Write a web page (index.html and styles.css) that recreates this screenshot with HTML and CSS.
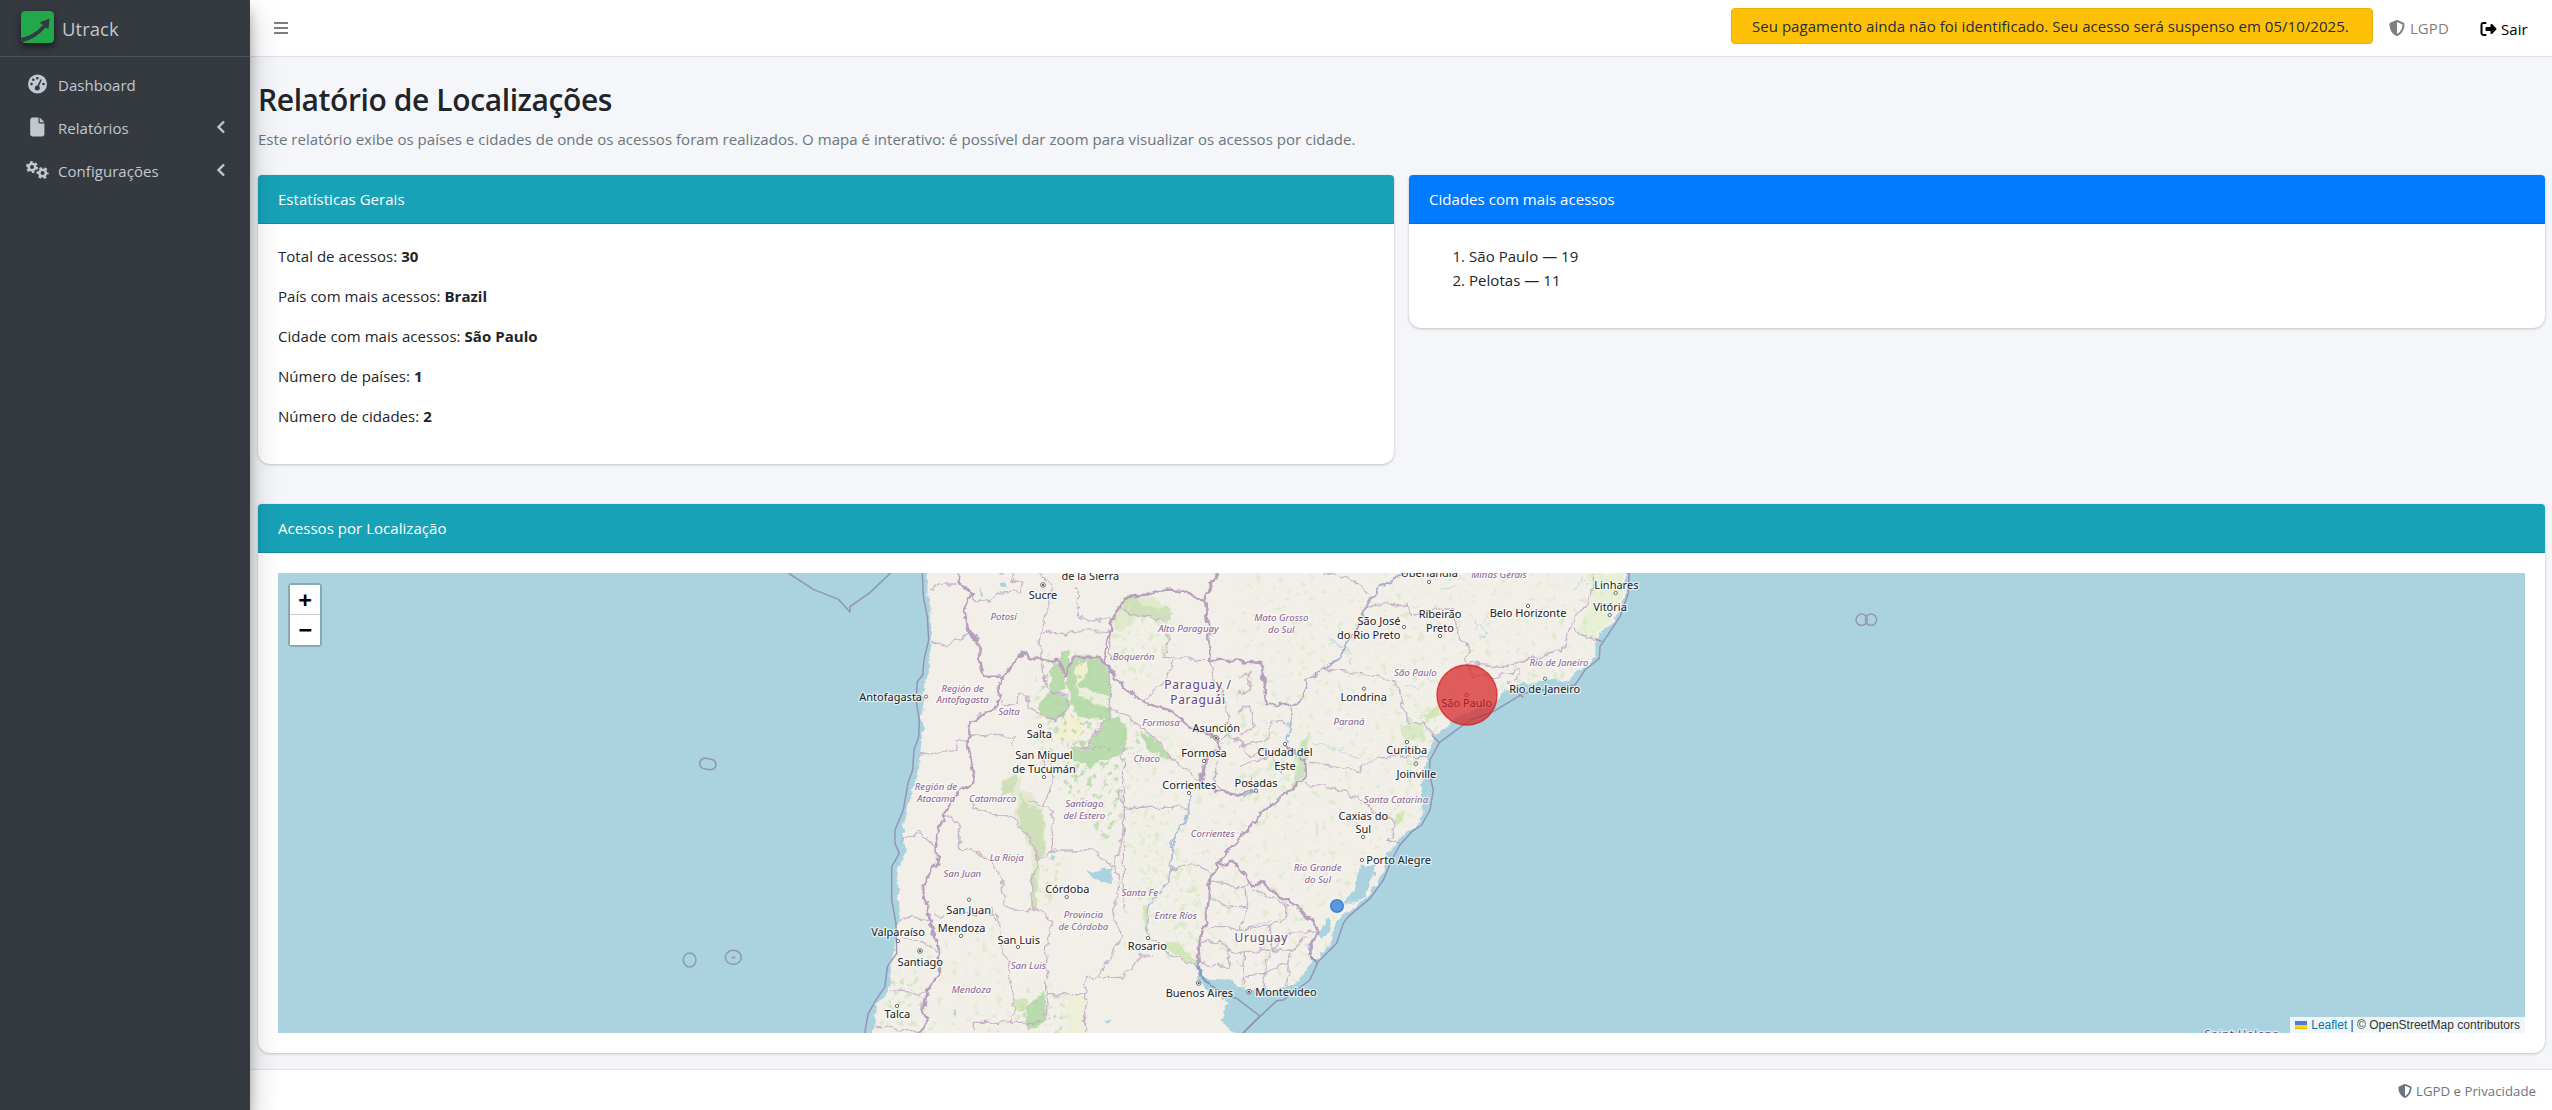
FILE: index.html
```html
<!DOCTYPE html>
<html lang="pt-BR">
<head>
<meta charset="utf-8">
<title>Utrack</title>
<link rel="stylesheet" href="styles.css">
</head>
<body>
<div class="app">
  <aside class="sidebar">
    <div class="brand">
      <svg class="brand-logo" viewBox="0 0 33 32"><rect width="33" height="32" rx="4" fill="#21a84a"/><path d="M0 27Q12 25 22 14L18.500 11.500 28.500 7.500 27.500 18 24.500 16.500Q14 28.500 2 31Q.5 30.500 0 29.500Z" fill="#343a40"/></svg>
      <span class="brand-text">Utrack</span>
    </div>
    <nav class="nav">
      <a class="nav-item">
        <svg class="nav-icon" viewBox="0 0 24 20"><circle cx="12.500" cy="10" r="9.500" fill="#c2c7d0"/><g fill="#343a40"><circle cx="6.500" cy="10" r="1.300"/><circle cx="8.300" cy="5.800" r="1.300"/><circle cx="12.300" cy="4.200" r="1.300"/><circle cx="18.500" cy="10" r="1.300"/><circle cx="12.300" cy="14" r="2.500"/><path d="M15.600 5.200l1.300.6-3.600 8-1.600-.7z"/></g></svg>
        <span>Dashboard</span>
      </a>
      <a class="nav-item">
        <svg class="nav-icon" viewBox="0 0 24 20"><path transform="translate(5.200 .500) scale(.037)" fill="#c2c7d0" d="M0 64C0 28.700 28.700 0 64 0L224 0l0 128c0 17.700 14.300 32 32 32l128 0 0 288c0 35.300-28.700 64-64 64L64 512c-35.300 0-64-28.700-64-64L0 64zm384 64l-128 0L256 0 384 128z"/></svg>
        <span>Relatórios</span>
        <svg class="chevron" viewBox="0 0 10 14"><path d="M8 1.500L2.500 7 8 12.500"/></svg>
      </a>
      <a class="nav-item">
        <svg class="nav-icon" viewBox="0 0 24 20"><g fill="none" stroke="#c2c7d0"><circle cx="7" cy="7" r="3.300" stroke-width="2.600"/><circle cx="7" cy="7" r="5" stroke-width="2.200" stroke-dasharray="2.600 2.636"/><circle cx="17.600" cy="13" r="3.300" stroke-width="2.600"/><circle cx="17.600" cy="13" r="5" stroke-width="2.200" stroke-dasharray="2.600 2.636" stroke-dashoffset="1.300"/></g></svg>
        <span>Configurações</span>
        <svg class="chevron" viewBox="0 0 10 14"><path d="M8 1.500L2.500 7 8 12.500"/></svg>
      </a>
    </nav>
  </aside>

  <div class="page">
    <header class="topbar">
      <svg class="menu-icon" viewBox="0 0 14 12"><path d="M0 1h14M0 6h14M0 11h14" stroke="#7f7f7f" stroke-width="1.800"/></svg>
      <div class="topbar-right">
        <div class="alert">Seu pagamento ainda não foi identificado. Seu acesso será suspenso em 05/10/2025.</div>
        <a class="top-link lgpd"><svg class="icon-shield" viewBox="0 0 512 512"><path d="M256 0c4.600 0 9.200 1 13.400 2.900L457.700 82.800c22 9.300 38.400 31 38.300 57.200c-.5 99.200-41.300 280.700-213.600 363.200c-16.700 8-36.100 8-52.800 0C57.300 420.700 16.500 239.200 16 140c-.1-26.200 16.300-47.900 38.300-57.200L242.700 2.900C246.800 1 251.400 0 256 0zm0 66.800V444.800C394 378 431.100 230.100 432 141.400L256 66.800z"/></svg>LGPD</a>
        <a class="top-link sair"><svg class="icon-exit" viewBox="0 0 512 512"><path d="M377.900 105.900L500.700 228.700c7.200 7.200 11.300 17.100 11.300 27.300s-4.100 20.100-11.300 27.300L377.900 406.100c-6.400 6.400-15 9.900-24 9.900c-18.700 0-33.900-15.200-33.900-33.900l0-62.100-128 0c-17.700 0-32-14.300-32-32l0-64c0-17.700 14.300-32 32-32l128 0 0-62.100c0-18.700 15.200-33.900 33.900-33.900c9 0 17.600 3.600 24 9.900zM160 96L96 96c-17.700 0-32 14.300-32 32l0 256c0 17.700 14.300 32 32 32l64 0c17.700 0 32 14.300 32 32s-14.300 32-32 32l-64 0c-53 0-96-43-96-96L0 128C0 75 43 32 96 32l64 0c17.700 0 32 14.300 32 32s-14.300 32-32 32z"/></svg>Sair</a>
      </div>
    </header>

    <main class="content">
      <h1 class="title">Relatório de Localizações</h1>
      <p class="subtitle">Este relatório exibe os países e cidades de onde os acessos foram realizados. O mapa é interativo: é possível dar zoom para visualizar os acessos por cidade.</p>

      <div class="row">
        <section class="card">
          <div class="card-header info">Estatísticas Gerais</div>
          <div class="card-body">
            <p>Total de acessos: <strong>30</strong></p>
            <p>País com mais acessos: <strong>Brazil</strong></p>
            <p>Cidade com mais acessos: <strong>São Paulo</strong></p>
            <p>Número de países: <strong>1</strong></p>
            <p>Número de cidades: <strong>2</strong></p>
          </div>
        </section>
        <section class="card">
          <div class="card-header primary">Cidades com mais acessos</div>
          <div class="card-body">
            <ol>
              <li>São Paulo — 19</li>
              <li>Pelotas — 11</li>
            </ol>
          </div>
        </section>
      </div>

      <section class="card">
        <div class="card-header info">Acessos por Localização</div>
        <div class="card-body">
          <div class="map">
            <svg class="map-canvas" viewBox="-1686 39 6741 1380">
              <defs>
                <filter id="rough" filterUnits="userSpaceOnUse" x="-1686" y="-60" width="4500" height="1600">
                  <feTurbulence type="fractalNoise" baseFrequency=".035" numOctaves="3" seed="4"/>
                  <feDisplacementMap in="SourceGraphic" scale="26" xChannelSelector="R" yChannelSelector="G"/>
                </filter>
                <filter id="speckle" filterUnits="userSpaceOnUse" x="0" y="0" width="2500" height="1440">
                  <feTurbulence type="fractalNoise" baseFrequency=".05" numOctaves="4" seed="9"/>
                  <feColorMatrix values="0 0 0 0 1  0 0 0 0 1  0 0 0 0 1  7 0 0 0 -3.900" result="n"/>
                  <feGaussianBlur in="SourceGraphic" stdDeviation="12" result="b"/>
                  <feComposite in="b" in2="n" operator="in"/>
                </filter>
                <filter id="speckle-sparse" filterUnits="userSpaceOnUse" x="0" y="0" width="2500" height="1440">
                  <feTurbulence type="fractalNoise" baseFrequency=".045" numOctaves="4" seed="21"/>
                  <feColorMatrix values="0 0 0 0 1  0 0 0 0 1  0 0 0 0 1  8 0 0 0 -5" result="n"/>
                  <feComposite in="SourceGraphic" in2="n" operator="in"/>
                </filter>
                <clipPath id="land-clip"><use href="#land"/></clipPath>
              </defs>
              <rect x="-1686" y="39" width="6741" height="1380" fill="#aad3df"/>

              <g filter="url(#rough)">
                <path id="land" fill="#f2efe9" d="M263 0L263 39 262 130 275 200 275 250 268 290 270 330 263 355 250 370 248 400 252 440 245 480 252 530 243 560 238 620 232 650 222 665 215 700 205 730 195 790 183 820 195 850 192 895 175 920 170 970 178 1030 180 1080 168 1130 165 1180 150 1210 148 1280 125 1320 110 1340 100 1390 85 1480H1240L1195 1419 1175 1412 1150 1390 1147 1360 1163 1330 1140 1310 1110 1290 1085 1270 1072 1245 1095 1250 1110 1262 1165 1255 1185 1270 1230 1293 1280 1290 1330 1285 1360 1275 1390 1250 1400 1230 1415 1205 1435 1190 1465 1160 1480 1120 1490 1085 1505 1065 1540 1040 1580 1005 1610 970 1630 930 1640 900 1645 875 1670 850 1700 815 1740 785 1745 750 1745 700 1748 640 1760 590 1775 560 1790 525 1810 505 1850 475 1890 455 1930 440 1970 425 1990 400 2010 385 2050 370 2120 362 2190 360 2205 340 2250 310 2265 290 2268 250 2290 215 2325 180 2340 150 2355 110 2362 39V0Z"/>
                <g fill="#dfe8c8" opacity=".8">
                  <path d="M530 690L575 700 610 760 615 860 600 905 580 1050 577 900 560 830 530 800Z"/>
                  <path d="M815 190L860 110 940 110 990 140 995 185 900 170 840 220Z"/>
                  <path d="M480 700L495 650 545 655 530 705Z"/>
                  <path d="M680 1305H735V1430H680Z" fill="#eef0d5"/>
                </g>
                <g fill="#cfdfb9">
                  <path d="M850 118L890 110 910 140 995 142V185L950 178 845 150Z"/>
                  <path d="M480 705L490 660 530 645 520 700Z"/>
                  <path d="M535 800L540 700 565 740 605 750 612 880 595 905 580 850Z"/>
                  <path d="M576 930L590 960 592 1048 576 1048Z"/>
                </g>
                <g fill="#badbae">
                  <path d="M660 270L688 270 686 310 675 350 660 310Z"/>
                  <path d="M630 330L655 305 672 350 680 380 655 400 630 395Z"/>
                  <path d="M698 290H775L808 340V465L790 480 740 470 700 460 690 400 680 360Z"/>
                  <path d="M600 425L640 395 685 410 680 470 640 480 600 465Z"/>
                  <path d="M808 468L860 490 865 540 850 560 738 562Z"/>
                  <path d="M900 515L930 525 1000 600 930 575Z"/>
                  <path d="M700 565H850V585L800 600 740 625 700 600Z"/>
                  <path d="M555 1350L610 1300 620 1385 560 1419Z"/>
                  <path d="M1380 555L1405 515 1405 550 1398 640 1360 675 1370 600Z" opacity=".7"/>
                </g>
                <g fill="#f4f1d2" opacity=".95">
                  <path d="M715 310L745 295 735 350 700 385Z"/>
                  <path d="M705 375L808 410V445L770 432 720 405Z" fill="#eef0df"/>
                  <path d="M660 480L710 460 735 520 700 545 650 540Z"/>
                </g>
                <g fill="#c9e3a8" opacity=".75">
                  <path d="M1745 465L1790 445 1800 460 1760 490Z"/>
                  <path d="M525 1320L570 1315 565 1345 525 1350Z"/>
                  <path d="M960 1150L1010 1150 1070 1200 1080 1220 1020 1190Z"/>
                  <path d="M908 1040L925 1035 925 1110 935 1140 915 1100Z"/>
                  <path d="M1670 760L1695 750 1690 780 1665 800Z"/>
                </g>
                <path fill="#d5e6c0" opacity=".8" d="M1680 500L1720 485 1755 490 1750 530 1700 540 1685 520Z"/>
                <path fill="#e4efcf" opacity=".8" d="M2240 39H2350L2345 120 2290 200 2265 235 2210 220 2220 190 2260 120Z"/>
              </g>

              <g clip-path="url(#land-clip)">
                <g filter="url(#speckle)" opacity=".8">
                  <path fill="#b4d8a6" d="M590 290L690 280 800 300 815 460 990 590 860 600 850 780 800 860 680 720 640 640 590 520ZM530 1370L560 1280 660 1290 680 1430H540Z"/>
                  <path fill="#d6eabf" d="M800 220L850 130 990 140 1000 260 960 330 900 390 820 320ZM1000 920L1080 920 1100 1060 1070 1210 980 1170ZM900 740L980 760 960 980 930 1120 900 1050ZM940 510L1060 560 1080 640 1010 620ZM1200 640L1390 560 1390 660 1260 750 1170 720Z"/>
                  <path fill="#cbe3b8" d="M590 430L650 460 650 600 590 680ZM170 1190L270 1170 250 1400 110 1400ZM1690 460L1790 440 1760 560 1740 700 1680 640ZM1930 420L2060 360 2200 330 2200 360 2000 400ZM600 900L670 890 650 1020 590 1040ZM540 780L600 790 600 880Z"/>
                </g>
                <g filter="url(#speckle-sparse)" opacity=".5">
                  <path fill="#cbe5b8" d="M1200 40H2350L2200 360 1800 480 1730 790 1640 870 1450 1280 1180 1280 1080 1200 850 1200 850 600 1100 600ZM300 1100L470 1080 520 1419 240 1419Z"/>
                </g>
              </g>

              <g filter="url(#rough)">
                <g fill="#aad3df">
                  <path d="M1565 915L1605 915 1600 955 1570 1010 1530 1035 1512 1030 1515 1010 1545 990 1555 950Z"/>
                  <path d="M1465 1070L1475 1080 1470 1120 1450 1130 1440 1115 1455 1090Z"/>
                  <path d="M738 925L760 935 790 925 818 925V965L785 970 765 955Z"/>
                  <path d="M635 880L648 882 645 905 634 900Z"/>
                  <path d="M472 40L490 40 488 48 474 46ZM478 62L498 60 498 76 484 76ZM410 85L432 104 424 108ZM340 1345L350 1350 345 1375ZM790 1380L808 1380 804 1392 792 1390Z"/>
                </g>
                <g fill="none" stroke="#b5d6e2" stroke-width="3" stroke-linejoin="round">
                  <path d="M1460 240L1520 265 1535 310M1900 210L1935 175 1960 150M1900 180L1940 225 1920 240M1420 550L1490 570 1560 600M1700 380L1740 385M1800 90L1850 80M2200 90L2230 60 2245 80M1210 1110L1260 1095 1300 1080M1400 1150L1410 1180M1430 790L1437 830"/>
                </g>
                <path fill="none" stroke="#a9c6dc" stroke-width="7" d="M1700 39L1620 80 1585 130 1570 175 1530 230 1500 290 1445 330"/>
                <path fill="none" stroke="#b3a3c4" stroke-width="4" d="M1700 39L1620 80 1585 130 1570 175 1530 230 1500 290 1445 330 1405 360 1375 430 1358 440"/>
                <path fill="none" stroke="#a9bdd6" stroke-width="5" d="M1355 440L1350 510 1335 560M1047 700L1045 760 1000 840 990 960 925 1040 920 1120"/>
                <path fill="none" stroke="#c3b4cf" stroke-width="4" d="M920 1120L990 1180 1078 1220"/>
                <path fill="none" stroke="#9fbfd8" stroke-width="6" d="M1120 690L1180 700 1215 710 1250 690"/>
                <path fill="none" stroke="#7c9fc6" stroke-width="8" d="M1075 1200L1085 1250 1110 1275M1440 1115L1410 1150 1410 1190"/>
                <g fill="none" stroke="#bfa6c2" stroke-width="4" opacity=".8" stroke-linejoin="round">
                  <path d="M270 85L310 72 350 72M278 247L305 247 318 260 345 242 388 218M240 585L300 578 350 572 352 545 383 540M388 525L520 532 520 565M600 40L640 85 610 180 600 250 605 290 615 370 630 395 683 402 683 450 650 480 610 470 570 440 560 405 535 400 530 430 500 440 480 420M392 100L400 120 450 130 470 100 540 95 548 70 515 60 525 40M610 220L640 212 680 225 690 212 812 214M700 80L715 85V177H815M845 150L980 188 985 240 970 292 1108 300M1000 300L970 370 910 420M812 214V300M808 330V466L735 562M690 562H850V742H1047M808 445L860 470 940 530 1000 600 1080 660M1108 300L1120 350 1160 430 1165 520 1135 540M1130 600L1120 650 1150 700M1160 530L1200 540 1230 590 1280 560M1195 350L1230 340 1225 390 1195 400M1190 460L1230 440 1240 500 1200 530"/>
                  <path d="M315 765L360 790 355 865 400 870 460 910 485 960 490 1030 520 1050 600 1048 635 1085 620 1160 620 1385M390 720L400 745 470 765 525 770 530 800 570 830 597 905 575 960 576 1050M597 905L635 870 760 870 790 900 820 920 840 960 818 1070 848 1125 775 1250M560 720L600 735 635 750 638 870M600 590L640 660 610 740M838 690L850 740 845 830 820 920M185 840L240 820 285 860M182 1080L210 1070 270 1080M180 1130L260 1150 300 1180M150 1290L250 1300M100 1400L150 1400 240 1420M285 1060L310 1070 340 1060 470 1060 480 1150 510 1210 505 1250 525 1320 515 1385M400 1430V1387H620M620 1304H737V1252H850L900 1190 940 1180M737 1252V1430M850 742V1040M990 925L1060 910 1110 940M455 1045L465 1080"/>
                  <path d="M1445 330L1560 340 1600 350 1660 360 1680 400 1700 490 1750 490 1790 530M1580 140L1640 130 1700 140 1720 165 1800 145 1840 150 1850 190 1860 240 1885 250 1880 310 1900 350 1960 350 2040 330 2045 345 2000 370M1880 310L1990 320 2060 300 2170 270 2190 210 2210 160 2240 140 2260 80 2260 39M2205 200L2225 225 2285 240M1450 39L1520 50 1585 100M1405 610L1480 615 1560 635 1570 610 1640 590 1760 590M1395 670L1460 680 1510 690 1560 720 1620 770 1665 780 1660 830 1640 840 1680 850M1200 560L1280 540 1300 480 1350 490M1200 620L1290 590 1330 640M1250 700L1230 640"/>
                  <path d="M1115 960L1180 980 1220 980M1110 1015L1170 1040 1220 1040M1100 1100L1160 1100 1200 1110 1220 1050 1215 980 1240 960M1240 990L1340 1030 1340 1070 1290 1100 1200 1110M1340 1120L1300 1170 1360 1170 1400 1130M1080 1150L1140 1140 1160 1170 1200 1180 1290 1170 1270 1240 1340 1210 1360 1170M1300 1170L1290 1100M1075 1200L1100 1215 1170 1220 1160 1170M1210 1180V1270M1270 1240L1280 1290M1210 1250L1270 1240M1345 1210L1340 1280M1340 1120L1440 1115"/>
                </g>
                <g fill="none" stroke="#b79fbd" stroke-width="7.500" stroke-linejoin="round">
                  <path d="M352 39L362 75 392 100 372 150 388 218 410 240 430 350 485 350 470 435 390 490 385 560 403 660 350 700 310 770 288 840 292 910 270 940 248 990 265 1060 285 1130 297 1170 297 1240 262 1290 250 1350 262 1380 240 1420"/>
                  <path d="M485 350L540 295 545 275 570 295 655 300 674 350 698 290H775L790 305 820 340 850 380 920 430 990 450 1050 500 1130 530 1135 570 1095 600 1085 660 1070 690"/>
                  <path d="M790 305L815 185 850 117 970 92H1035L1095 128 1130 39M1095 128L1108 200 1108 300 1180 300 1265 310 1275 400 1280 435 1355 435"/>
                  <path d="M1335 555L1395 600 1398 650 1350 690 1265 760 1200 830 1130 915 1110 960 1100 1080 1075 1150 1080 1220M1130 915L1180 905 1240 980 1265 965 1310 1005 1345 1020 1400 1070 1440 1115 1410 1150 1412 1190 1430 1207M1120 690L1200 705 1240 690"/>
                </g>
              </g>

              <g fill="none" stroke="#8e8aae" stroke-width="4.500" opacity=".85" stroke-linejoin="round">
                <path d="M247 39L250 110 262 170 266 240 252 300 248 345 232 365 228 420 238 480 236 530 222 570 218 630 205 665 190 750 165 810 165 850 178 880 155 920 155 1020 168 1090 170 1180 142 1220 135 1280 105 1325 85 1360 72 1430"/>
                <path d="M2367 39L2365 100 2340 170 2280 260 2278 295 2235 330 2205 375 2050 400 1960 455 1890 480 1798 548 1770 600 1768 640 1780 690 1770 750 1745 795 1715 815 1680 855 1655 900 1630 960 1590 1015 1525 1070 1510 1090 1490 1150 1433 1207 1410 1260 1330 1320 1310 1322 1208 1420"/>
                <path d="M1110 1275L1170 1310 1190 1315 1260 1368 1208 1420M2020 390L2050 412M2265 235L2285 245M1775 525L1798 548M1430 1207L1412 1190"/>
                <path d="M-155 39L-80 88 -5 118 30 156 30 140 90 98 152 39"/>
                <path d="M-405 594Q-422 597 -421 613 -418 626 -402 627 -386 633 -374 623 -369 605 -381 599 -393 597 -405 594Z"/>
                <ellipse cx="-451" cy="1200" rx="19" ry="21"/><ellipse cx="-320" cy="1192" rx="24" ry="21"/>
                <path d="M-326 1195l6-4 6 3"/>
                <circle cx="3065" cy="179" r="17"/><circle cx="3093" cy="179" r="17"/>
              </g>

              <g class="dots">
                <circle cx="258" cy="410" r="5"/><circle cx="600" cy="498" r="5"/><circle cx="612" cy="651" r="5"/><circle cx="1092" cy="603" r="5"/><circle cx="1047" cy="699" r="5"/><circle cx="1248" cy="692" r="5"/>
                <circle cx="1767" cy="66" r="5"/><circle cx="2327" cy="99" r="5"/><circle cx="2309" cy="165" r="5"/><circle cx="2064" cy="138" r="5"/><circle cx="1692" cy="201" r="5"/><circle cx="1800" cy="228" r="5"/><circle cx="1572" cy="386" r="5"/><circle cx="2115" cy="356" r="5"/><circle cx="1880" cy="405" r="5"/><circle cx="1335" cy="552" r="5"/><circle cx="1701" cy="546" r="5"/><circle cx="1728" cy="611" r="5"/>
                <circle cx="387" cy="1019" r="5"/><circle cx="363" cy="1128" r="5"/><circle cx="174" cy="1143" r="5"/><circle cx="534" cy="1161" r="5"/><circle cx="680" cy="1011" r="5"/><circle cx="924" cy="1134" r="5"/><circle cx="171" cy="1338" r="5"/><circle cx="1569" cy="831" r="5"/><circle cx="1566" cy="900" r="5"/>
              </g>
              <g class="capitals">
                <circle cx="609" cy="75" r="7"/><circle cx="1128" cy="534" r="7"/><circle cx="240" cy="1173" r="7"/><circle cx="1076" cy="1269" r="7"/><circle cx="1227" cy="1295" r="7"/>
              </g>
              <g class="capital-core">
                <circle cx="609" cy="75" r="3"/><circle cx="1128" cy="534" r="3"/><circle cx="240" cy="1173" r="3"/><circle cx="1076" cy="1269" r="3"/><circle cx="1227" cy="1295" r="3"/>
              </g>

              <g class="state">
                <text x="491" y="180">Potosí</text><text x="1045" y="216">Alto Paraguay</text><text x="881" y="300">Boquerón</text>
                <text x="368" y="395">Región de</text><text x="368" y="430">Antofagasta</text><text x="507" y="465">Salta</text>
                <text x="963" y="499">Formosa</text><text x="920" y="606">Chaco</text>
                <text x="288" y="691">Región de</text><text x="288" y="727">Atacama</text><text x="458" y="727">Catamarca</text>
                <text x="733" y="741">Santiago</text><text x="733" y="777">del Estero</text><text x="1118" y="831">Corrientes</text>
                <text x="500" y="902">La Rioja</text><text x="367" y="952">San Juan</text><text x="899" y="1007">Santa Fe</text>
                <text x="1007" y="1077">Entre Ríos</text><text x="730" y="1073">Provincia</text><text x="730" y="1109">de Córdoba</text>
                <text x="565" y="1226">San Luis</text><text x="394" y="1299">Mendoza</text>
                <text x="1324" y="184">Mato Grosso</text><text x="1324" y="219">do Sul</text><text x="1977" y="55">Minas Gerais</text>
                <text x="2157" y="319">Rio de Janeiro</text><text x="1726" y="349">São Paulo</text><text x="1527" y="496">Paraná</text>
                <text x="1668" y="730">Santa Catarina</text><text x="1433" y="933">Rio Grande</text><text x="1433" y="969">do Sul</text>
              </g>
              <g class="country">
                <text x="1074" y="388">Paraguay /</text><text x="1074" y="433">Paraguái</text><text x="1264" y="1146">Uruguay</text>
                <text x="4206" y="1435" font-size="34">Saint Helena</text>
              </g>
              <g class="city">
                <text x="751" y="61">de la Sierra</text><text x="609" y="117">Sucre</text><text x="152" y="423">Antofagasta</text>
                <text x="598" y="533">Salta</text><text x="612" y="598">San Miguel</text><text x="612" y="639">de Tucumán</text>
                <text x="1129" y="516">Asunción</text><text x="1092" y="590">Formosa</text><text x="1048" y="688">Corrientes</text><text x="1248" y="681">Posadas</text>
                <text x="1768" y="52">Uberlândia</text><text x="2329" y="86">Linhares</text><text x="2310" y="154">Vitória</text>
                <text x="1617" y="196">São José</text><text x="1586" y="237">do Rio Preto</text><text x="1800" y="175">Ribeirão</text><text x="1800" y="216">Preto</text>
                <text x="2064" y="172">Belo Horizonte</text><text x="1571" y="423">Londrina</text><text x="2114" y="398">Rio de Janeiro</text><text x="1880" y="441">São Paulo</text>
                <text x="1335" y="588">Ciudad del</text><text x="1335" y="629">Este</text><text x="1700" y="582">Curitiba</text><text x="1729" y="653">Joinville</text>
                <text x="1570" y="779">Caxias do</text><text x="1570" y="820">Sul</text><text x="1676" y="913">Porto Alegre</text>
                <text x="682" y="998">Córdoba</text><text x="386" y="1061">San Juan</text><text x="365" y="1116">Mendoza</text><text x="174" y="1129">Valparaíso</text>
                <text x="536" y="1151">San Luis</text><text x="241" y="1217">Santiago</text><text x="922" y="1170">Rosario</text><text x="172" y="1374">Talca</text>
                <text x="1078" y="1311">Buenos Aires</text><text x="1338" y="1307">Montevideo</text>
              </g>

              <circle cx="1881" cy="405" r="90" fill="#d61f1f" fill-opacity=".7" stroke="#d91e1e" stroke-opacity=".8" stroke-width="4"/>
              <circle cx="1491" cy="1038" r="19" fill="#2b7bd6" fill-opacity=".75" stroke="#1f6fd0" stroke-opacity=".8" stroke-width="4"/>
            </svg>
            <div class="zoom-control"><span>+</span><span>−</span></div>
            <div class="attribution"><svg class="flag" viewBox="0 0 12 8"><path fill="#4c7be1" d="M0 0h12v4H0z"/><path fill="#ffd500" d="M0 4h12v3H0z"/><path fill="#e0bc00" d="M0 7h12v1H0z"/></svg><a>Leaflet</a> | © OpenStreetMap contributors</div>
          </div>
        </div>
      </section>
    </main>

    <footer class="footer"><svg class="icon-shield" viewBox="0 0 512 512"><path d="M256 0c4.600 0 9.200 1 13.400 2.900L457.700 82.800c22 9.300 38.400 31 38.300 57.200c-.5 99.200-41.300 280.700-213.600 363.200c-16.700 8-36.100 8-52.800 0C57.300 420.700 16.500 239.200 16 140c-.1-26.200 16.300-47.900 38.300-57.200L242.700 2.900C246.800 1 251.400 0 256 0zm0 66.800V444.800C394 378 431.100 230.100 432 141.400L256 66.800z"/></svg>LGPD e Privacidade</footer>
  </div>
</div>
</body>
</html>
```
FILE: styles.css
```css
* { box-sizing: border-box; }
body {
  margin: 0;
  font: 15px/24px "Open Sans", "Noto Sans", sans-serif;
  letter-spacing: .04px;
  color: #212529;
  background: #f4f6f9;
}
p, h1, ol { margin: 0; }
.app { display: flex; height: 1110px; overflow: hidden; }

.sidebar {
  width: 250px;
  flex: none;
  z-index: 2;
  background: #343a40;
  color: #c2c7d0;
  box-shadow: 0 14px 28px rgba(0,0,0,.25), 0 10px 10px rgba(0,0,0,.22);
}
.brand {
  display: flex;
  gap: 8px;
  height: 57px;
  padding: 11px 21px 0;
  border-bottom: 1px solid #4b545c;
}
.brand-logo {
  width: 33px;
  height: 32px;
  border-radius: 4px;
  box-shadow: 0 5px 10px rgba(0,0,0,.3), 0 3px 5px rgba(0,0,0,.25);
}
.brand-text { font-size: 18.500px; line-height: 36px; }
.nav { padding-top: 7px; }
.nav-item {
  display: flex;
  align-items: center;
  height: 43px;
  padding: 0 24px 2px 25px;
}
.nav-icon { width: 24px; height: 20px; margin-right: 9px; margin-top: -2px; }
.chevron { width: 10px; height: 14px; margin-left: auto; margin-top: -2px; fill: none; stroke: #c2c7d0; stroke-width: 2.400; }

.page { flex: 1; min-width: 0; display: flex; flex-direction: column; }
.topbar {
  display: flex;
  flex: none;
  align-items: flex-start;
  justify-content: space-between;
  height: 57px;
  padding: 8px 24px;
  background: #fff;
  border-bottom: 1px solid #dee2e6;
}
.menu-icon { width: 14px; height: 12px; margin-top: 14px; }
.topbar-right { display: flex; }
.alert {
  width: 642px;
  height: 36px;
  padding: 5px 20px;
  border: 1px solid #edb100;
  border-radius: 4px;
  background: #ffc107;
  color: #1f2d3d;
  white-space: nowrap;
}
.top-link { display: flex; align-items: center; height: 40px; gap: 5px; }
.icon-shield { width: 16px; height: 16px; fill: currentColor; }
.lgpd { width: 91px; margin-left: 16px; color: #7f7f7f; }
.sair { width: 48px; gap: 4px; color: #000; height: 42px; }
.icon-exit { width: 17px; height: 16px; flex: none; }

.content { flex: 1; padding: 24px 7px 0 8px; }
.title { font-size: 30px; line-height: 38.400px; font-weight: 600; letter-spacing: -.4px; margin-bottom: 8px; padding-top: 1px; margin-top: -1px; }
.subtitle { color: #6c757d; margin-bottom: 24px; }
.row { display: grid; grid-template-columns: 1fr 1fr; gap: 15px; align-items: start; margin-bottom: 40px; }
.card {
  border-radius: 4px 4px 12px 12px;
  background: #fff;
  box-shadow: 0 0 1px rgba(0,0,0,.13), 0 1px 3px rgba(0,0,0,.2);
}
.card-header {
  height: 49px;
  padding: 12px 20px;
  border-radius: 4px 4px 0 0;
  border-bottom: 1px solid rgba(0,0,0,.125);
  color: #fff;
}
.info { background: #17a2b8; }
.primary { background: #007bff; }
.card-body { padding: 20px; }
.card-body p, .card-body ol { margin-bottom: 16px; }
.card-body ol { padding-left: 40px; }

.map { position: relative; height: 460px; overflow: hidden; }
.map-canvas { display: block; width: 100%; height: 100%; font-family: "Noto Sans", sans-serif; letter-spacing: 0; }
.map-canvas text { text-anchor: middle; paint-order: stroke; stroke: rgba(255,255,255,.6); stroke-width: 8px; stroke-linejoin: round; }
.city { font-size: 33px; fill: #222; }
.state { font-size: 29px; font-style: italic; fill: #87608f; }
.country { font-size: 36px; letter-spacing: 2px; fill: #6b4472; }
.dots, .capitals { fill: #fff; stroke: #555; stroke-width: 2.500; }
.capital-core { fill: #333; }
.zoom-control {
  position: absolute;
  left: 10px;
  top: 10px;
  border: 2px solid rgba(0,0,0,.2);
  border-radius: 4px;
  background-clip: padding-box;
  color: #000;
}
.zoom-control span {
  display: block;
  width: 30px;
  height: 30px;
  background: #fff;
  font: bold 22px/30px "DejaVu Sans Mono", monospace;
  letter-spacing: 0;
  text-align: center;
}
.zoom-control span:first-child { border-bottom: 1px solid #ccc; }
.attribution {
  position: absolute;
  right: 0;
  bottom: 0;
  padding: 0 5px;
  background: rgba(255,255,255,.8);
  color: #333;
  font: 12px/16px "Liberation Sans", Arial, sans-serif;
  letter-spacing: 0;
  white-space: nowrap;
}
.attribution a { color: #0078a8; }
.flag { width: 12px; height: 8px; margin-right: 4px; }

.footer {
  display: flex;
  flex: none;
  align-items: center;
  justify-content: flex-end;
  gap: 4px;
  height: 41px;
  padding: 2px 16px 0;
  border-top: 1px solid #dee2e6;
  background: #fff;
  color: #6c757d;
  font-size: 13.200px;
}
.footer .icon-shield { width: 14px; height: 14px; }
```
